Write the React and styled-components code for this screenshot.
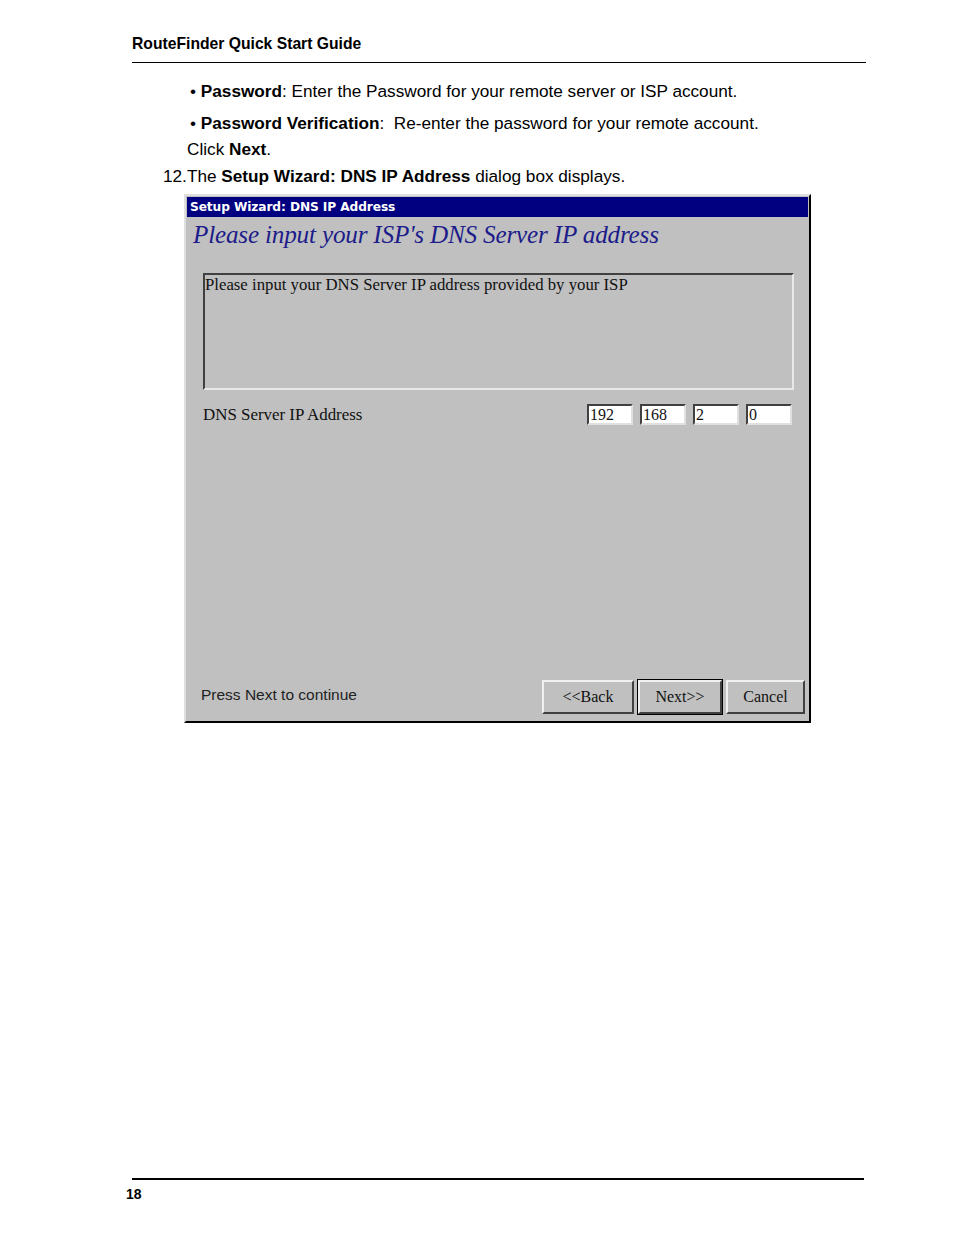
import React from "react";
import styled, { createGlobalStyle } from "styled-components";

const Global = createGlobalStyle`
  html, body { margin: 0; padding: 0; background: #fff; }
  body { font-family: "Liberation Sans", Arial, sans-serif; color: #000; }
`;

const Page = styled.div`
  width: 954px;
  height: 1235px;
  position: relative;
  display: flex;
  flex-direction: column;
  box-sizing: border-box;
  padding-top: 35px;
`;

const Header = styled.div`
  margin-left: 132px;
  width: 734px;
  font-size: 15.7px;
  font-weight: bold;
  line-height: 18px;
  padding-bottom: 9px;
  border-bottom: 1px solid #000;
`;

const Body = styled.div`
  flex: 1;
  font-size: 17.2px;
  line-height: 20px;
`;

const Line = styled.div`
  margin-left: ${(p) => p.$indent}px;
  margin-top: ${(p) => p.$top}px;
  white-space: nowrap;
`;

const Dialog = styled.div`
  margin-left: 184px;
  margin-top: 8px;
  width: 627px;
  height: 529px;
  box-sizing: border-box;
  background: #c0c0c0;
  border-top: 2px solid #dfdfdf;
  border-left: 2px solid #dfdfdf;
  border-right: 2px solid #000;
  border-bottom: 2px solid #000;
  padding: 1px;
  display: flex;
  flex-direction: column;
  font-family: "Liberation Serif", "Times New Roman", serif;
`;

const TitleBar = styled.div`
  height: 20px;
  background: #000080;
  color: #fff;
  font-family: "DejaVu Sans", Tahoma, sans-serif;
  font-weight: bold;
  font-size: 12.2px;
  letter-spacing: -0.1px;
  line-height: 20px;
  padding-left: 3px;
`;

const Heading = styled.div`
  margin-left: 6px;
  margin-top: 5px;
  color: #1c1c8a;
  font-style: italic;
  font-size: 25.2px;
  line-height: 26px;
  letter-spacing: -0.2px;
`;

const Group = styled.div`
  margin: 25px 14px 0 16px;
  height: 117px;
  box-sizing: border-box;
  border-top: 2px solid #404040;
  border-left: 2px solid #404040;
  border-right: 2px solid #e8e8e8;
  border-bottom: 2px solid #e8e8e8;
  font-size: 16.75px;
  line-height: 20px;
  padding-left: 0;
  color: #111;
`;

const IpRow = styled.div`
  margin: 14px 16px 0 16px;
  display: flex;
  align-items: center;
  color: #111;
  font-size: 16.9px;
`;

const IpLabel = styled.div`
  flex: 1;
`;

const IpFields = styled.div`
  display: flex;
  gap: 7px;
`;

const IpBox = styled.div`
  width: 46px;
  height: 21px;
  box-sizing: border-box;
  background: #fff;
  border-top: 2px solid #404040;
  border-left: 2px solid #404040;
  border-right: 2px solid #e0e0e0;
  border-bottom: 2px solid #e0e0e0;
  font-size: 16px;
  line-height: 17px;
  padding-left: 1px;
`;

const Spacer = styled.div`
  flex: 1;
`;

const Footer = styled.div`
  display: flex;
  align-items: center;
  padding: 0 3px 6px 14px;
`;

const Status = styled.div`
  flex: 1;
  margin-bottom: 5px;
  font-family: "Liberation Sans", Arial, sans-serif;
  font-size: 15.5px;
  color: #222;
`;

const Button = styled.div`
  width: ${(p) => p.$w}px;
  height: 34px;
  box-sizing: border-box;
  margin-left: ${(p) => p.$ml}px;
  display: flex;
  align-items: center;
  justify-content: center;
  font-size: 16px;
  color: #111;
  background: #c0c0c0;
  border-top: 2px solid #f0f0f0;
  border-left: 2px solid #f0f0f0;
  border-right: 2px solid #404040;
  border-bottom: 2px solid #404040;
  outline: ${(p) => (p.$default ? "1px solid #000" : "none")};
  outline-offset: 0;
`;

const FooterRule = styled.div`
  margin-left: 132px;
  width: 732px;
  border-top: 2px solid #000;
`;

const PageNum = styled.div`
  margin-left: 126px;
  margin-top: 5px;
  margin-bottom: 32px;
  font-size: 14px;
  font-weight: bold;
  line-height: 18px;
`;

export default function App() {
  return (
    <>
      <Global />
      <Page>
        <Header>RouteFinder Quick Start Guide</Header>
        <Body>
          <Line $indent={190} $top={18}>
            • <b>Password</b>: Enter the Password for your remote server or ISP account.
          </Line>
          <Line $indent={190} $top={12}>
            • <b>Password Verification</b>:&nbsp; Re-enter the password for your remote account.
          </Line>
          <Line $indent={187} $top={6}>
            Click <b>Next</b>.
          </Line>
          <Line $indent={163} $top={7}>
            12.The <b>Setup Wizard: DNS IP Address</b> dialog box displays.
          </Line>
          <Dialog>
            <TitleBar>Setup Wizard: DNS IP Address</TitleBar>
            <Heading>Please input your ISP's DNS Server IP address</Heading>
            <Group>Please input your DNS Server IP address provided by your ISP</Group>
            <IpRow>
              <IpLabel>DNS Server IP Address</IpLabel>
              <IpFields>
                {["192", "168", "2", "0"].map((v, i) => (
                  <IpBox key={i}>{v}</IpBox>
                ))}
              </IpFields>
            </IpRow>
            <Spacer />
            <Footer>
              <Status>Press Next to continue</Status>
              <Button $w={92} $ml={0}>&lt;&lt;Back</Button>
              <Button $w={84} $ml={4} $default>Next&gt;&gt;</Button>
              <Button $w={79} $ml={4}>Cancel</Button>
            </Footer>
          </Dialog>
        </Body>
        <FooterRule />
        <PageNum>18</PageNum>
      </Page>
    </>
  );
}
